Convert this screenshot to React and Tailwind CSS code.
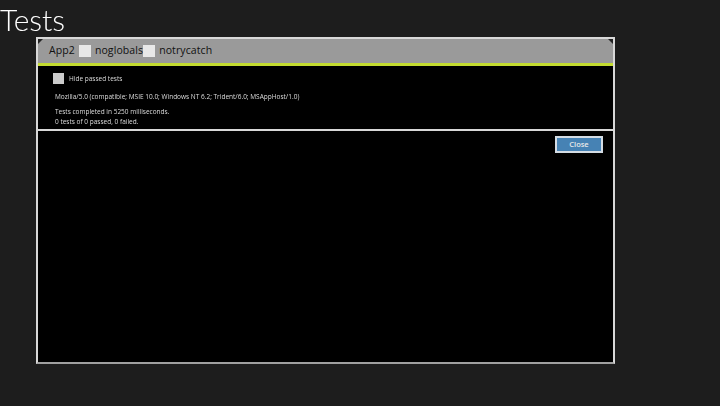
export default function App() {
  return (
    <div className="h-[406px] w-[720px] overflow-hidden bg-[#1d1d1d] font-['Open_Sans',sans-serif] text-white">
      <h1 className="h-[37px] font-['Lato',sans-serif] text-[30px] font-light leading-[38px] will-change-transform">Tests</h1>

      <div className="ml-[36px] flex h-[327px] w-[579px] flex-col border-2 border-[#d8d8d8] border-b-[#a0a0a0] bg-black">
        <div className="relative flex h-[27px] shrink-0 items-center border-b-[3px] border-[#c4dc30] bg-[#9a9a9a] pl-[11px] text-[10.5px] tracking-[0.1px] text-[#111]">
          <span className="absolute left-0 top-0 border-r-[5px] border-t-[5px] border-r-transparent border-t-[#222]" />
          <span className="absolute right-0 top-0 border-l-[5px] border-t-[5px] border-l-transparent border-t-[#222]" />
          <span>App2</span>
          <span className="ml-[4px] h-[12px] w-[12px] bg-[#e8e8e8]" />
          <span className="ml-[4px]">noglobals</span>
          <span className="h-[12px] w-[12px] bg-[#e8e8e8]" />
          <span className="ml-[4px]">notrycatch</span>
        </div>

        <div className="h-[65px] shrink-0 border-b-2 border-[#d8d8d8] pl-[15px] text-[6.5px] leading-[10px] text-[#dcdcdc] will-change-transform">
          <div className="flex h-[24px] items-center pt-[1px]">
            <span className="h-[11px] w-[11px] bg-[#cccccc]" />
            <span className="ml-[5px]">Hide passed tests</span>
          </div>
          <p className="ml-[2px] mt-[2px]">Mozilla/5.0 (compatible; MSIE 10.0; Windows NT 6.2; Trident/6.0; MSAppHost/1.0)</p>
          <p className="ml-[2px] mt-[5px]">Tests completed in 5250 milliseconds.</p>
          <p className="ml-[2px]">0 tests of 0 passed, 0 failed.</p>
        </div>

        <div className="flex flex-1 items-start justify-end pr-[10px] pt-[5px]">
          <button
            type="button"
            className="h-[17px] w-[48px] border-2 border-[#d4dce4] bg-[#4682b4] text-[7.5px] font-semibold leading-none text-[#e8e8e8]"
          >
            Close
          </button>
        </div>
      </div>
    </div>
  );
}
